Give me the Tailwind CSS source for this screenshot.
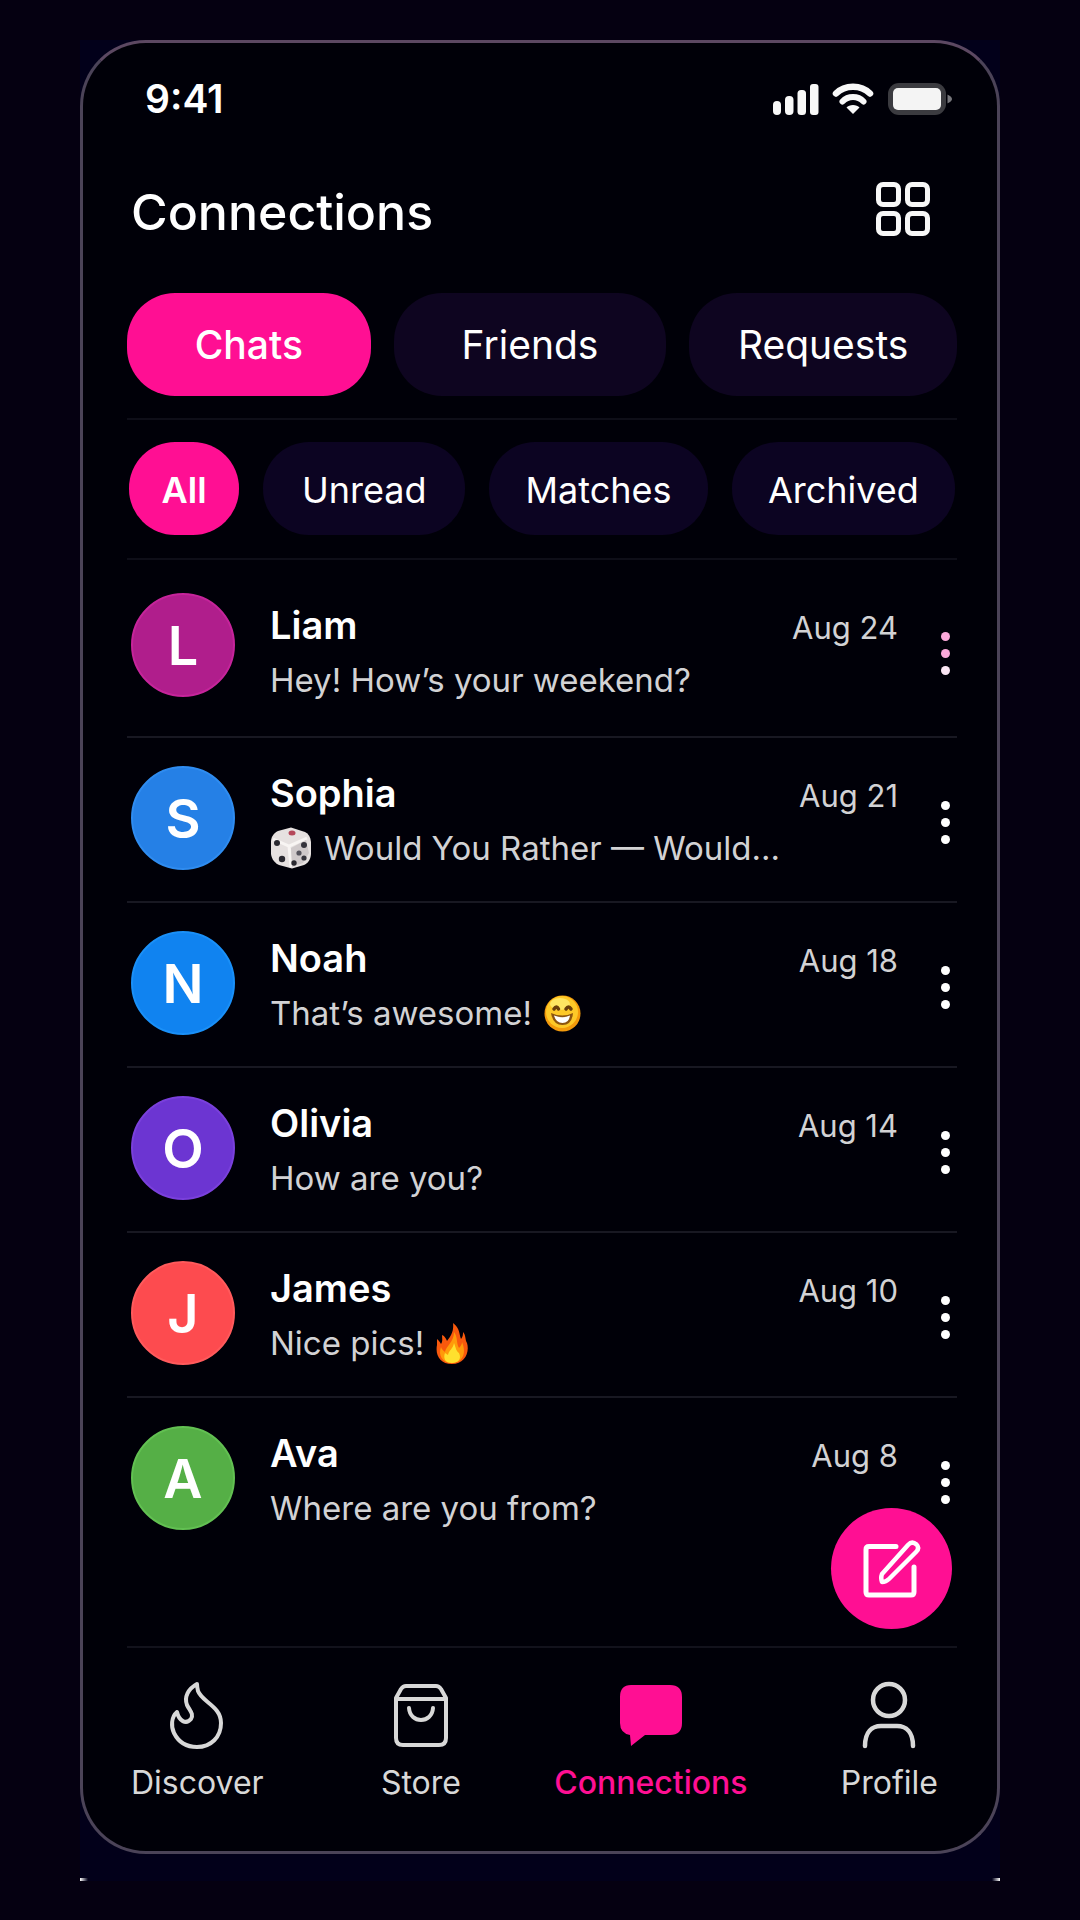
<!DOCTYPE html>
<html lang="en">
<head>
  <meta charset="UTF-8" />
  <meta name="viewport" content="width=device-width, initial-scale=1.0" />
  <title>Connections</title>
  <script src="https://cdn.jsdelivr.net/npm/@tailwindcss/browser@4"></script>
</head>
<body class="min-h-screen bg-[#050011] px-20 py-10 font-['Inter','Liberation_Sans',sans-serif] text-white">
  <div class="relative bg-[#02001a] pb-[27px]">
    <span class="absolute bottom-0 left-0 h-[3px] w-2 bg-linear-to-r from-white to-transparent"></span>
    <span class="absolute right-0 bottom-0 h-[3px] w-2 bg-linear-to-l from-white to-transparent"></span>

    <!-- Phone -->
    <div class="relative rounded-[66px] border-3 border-[#4b4358] border-t-[#5c4862] bg-[#000008]">

      <!-- Status bar -->
      <div class="flex h-[80px] items-center justify-between pt-8 pr-11 pl-[62px]">
        <span class="text-[39px] leading-[50px] font-semibold">9:41</span>
        <div class="flex items-center gap-[13px]">
          <svg class="h-8 w-[46px]" viewBox="0 0 46 32" fill="#f8f8f8">
            <rect x="0" y="18" width="8" height="14" rx="4" />
            <rect x="12" y="13" width="8.500" height="19" rx="4" />
            <rect x="24.500" y="7" width="8.500" height="25" rx="3.500" />
            <rect x="37" y="1" width="8.500" height="31" rx="3" />
          </svg>
          <svg class="h-8 w-[42px]" viewBox="0 0 42 32" fill="none" stroke="#f8f8f8" stroke-linecap="round">
            <path d="M4 10.500C13 1.500 29 1.500 38 10.500" stroke-width="6.500" />
            <path d="M10.500 18.500C16 12.500 26 12.500 31.500 18.500" stroke-width="6" />
            <path d="M21 31L14.500 24.500C17 21 25 21 27.500 24.500Z" fill="#f8f8f8" stroke="none" />
          </svg>
          <svg class="h-8 w-[66px]" viewBox="0 0 66 32">
            <rect x="1" y="0" width="58" height="32" rx="11" fill="#3b3b40" />
            <rect x="6" y="5" width="48" height="22" rx="5" fill="#f4f4f4" />
            <path d="M60.500 11.500C62 12.500 65 13.500 65 16C65 18.500 62 19.500 60.500 20.500Z" fill="#77777c" />
          </svg>
        </div>
      </div>

      <!-- Header -->
      <header class="mt-[60px] flex h-[58px] items-center justify-between pr-[66px] pl-12">
        <h1 class="text-[50px] leading-[58px] font-medium">Connections</h1>
        <button type="button" class="mb-1.5" aria-label="Grid view">
          <svg class="size-[56px]" viewBox="0 0 56 56" fill="none" stroke="#f7f7f7" stroke-width="5">
            <rect x="3.500" y="3.500" width="20" height="20" rx="4.500" />
            <rect x="32.500" y="3.500" width="20" height="20" rx="4.500" />
            <rect x="3.500" y="32.500" width="20" height="20" rx="4.500" />
            <rect x="32.500" y="32.500" width="20" height="20" rx="4.500" />
          </svg>
        </button>
      </header>

      <main class="pr-10 pl-11">
        <!-- Tabs -->
        <div class="mt-[52px] grid grid-cols-[244fr_273fr_268fr] gap-[23px] text-[39px]">
          <button type="button" class="h-[103px] rounded-[48px] bg-[#ff0f93] pt-0.5 font-medium">Chats</button>
          <button type="button" class="h-[103px] rounded-[48px] bg-[#0e0520] pt-0.5">Friends</button>
          <button type="button" class="h-[103px] rounded-[48px] bg-[#0e0520] pt-0.5">Requests</button>
        </div>
        <hr class="mt-[22px] border-t-2 border-[#0e0e18]" />

        <!-- Filters -->
        <div class="mx-0.5 mt-[22px] grid grid-cols-[110fr_202fr_218fr_223fr] gap-6 text-[36px]">
          <button type="button" class="h-[93px] rounded-[46px] bg-[#ff0f93] pt-0.5 font-semibold">All</button>
          <button type="button" class="h-[93px] rounded-[46px] bg-[#0c0422] pt-0.5">Unread</button>
          <button type="button" class="h-[93px] rounded-[46px] bg-[#0c0422] pt-0.5">Matches</button>
          <button type="button" class="h-[93px] rounded-[46px] bg-[#0c0422] pt-0.5">Archived</button>
        </div>
        <hr class="mt-[23px] border-t-2 border-[#0e0e18]" />

        <!-- Chats -->
        <ul class="pb-[116px] text-[#d2d2d4]">
          <li>
            <div class="flex gap-[35px] pt-[33px] pb-[38px] pl-1">
              <div class="flex size-[104px] shrink-0 items-center justify-center rounded-full border-2 border-[#c6249b] bg-[#b01e8c] text-[54px] font-semibold text-white">L</div>
              <div class="min-w-0 flex-1 pt-[10px]">
                <div class="flex items-baseline justify-between leading-[44px]">
                  <h2 class="text-[38px] font-semibold text-white">Liam</h2>
                  <time class="text-[31px]">Aug 24</time>
                </div>
                <p class="mt-3 text-[33px] leading-9 whitespace-nowrap">Hey! How’s your weekend?</p>
              </div>
              <button type="button" class="flex w-6 flex-col items-center justify-center gap-2 pt-4" aria-label="Options for Liam">
                <span class="size-[9px] rounded-full bg-[#fba9da]"></span>
                <span class="size-[9px] rounded-full bg-[#fba9da]"></span>
                <span class="size-[9px] rounded-full bg-[#fbe6f4]"></span>
              </button>
            </div>
            <hr class="border-t-2 border-[#181822]" />
          </li>
          <li>
            <div class="flex gap-[35px] pt-7 pb-[31px] pl-1">
              <div class="flex size-[104px] shrink-0 items-center justify-center rounded-full border-2 border-[#2f8cf0] bg-[#2580e6] text-[54px] font-semibold text-white">S</div>
              <div class="min-w-0 flex-1 pt-[5px]">
                <div class="flex items-baseline justify-between leading-[44px]">
                  <h2 class="text-[38px] font-semibold text-white">Sophia</h2>
                  <time class="text-[31px]">Aug 21</time>
                </div>
                <p class="mt-3 flex h-9 items-center gap-3 text-[33px] leading-9 whitespace-nowrap">
                  <svg class="size-[42px] shrink-0" viewBox="0 0 42 42" role="img" aria-label="Die">
                    <path d="M21 0.500L35 5C38.500 6.500 40.500 10 41 15L41 27C40.500 33 38 36 34 38L22 41.500L9 38C5 36 1.500 32 1 27L1 14C1.500 9 4 6 8 4Z" fill="#e6e1e0" />
                    <path d="M3 12L19 19L37 11M19 19L21 40" fill="none" stroke="#f8f5f3" stroke-width="3" />
                    <path d="M21 21L36 13L39 26L33 36L22 40Z" fill="#cfc9ca" />
                    <ellipse cx="22" cy="6" rx="3.500" ry="2.500" fill="#b5485a" />
                    <circle cx="7" cy="16" r="3" fill="#2a2930" />
                    <circle cx="12" cy="32" r="3.200" fill="#2a2930" />
                    <circle cx="24" cy="36" r="2.700" fill="#2a2930" />
                    <circle cx="34" cy="18" r="3" fill="#35343c" />
                    <circle cx="29" cy="26" r="2.600" fill="#55535c" />
                    <circle cx="34" cy="31" r="2.600" fill="#35343c" />
                  </svg>
                  Would You Rather — Would...
                </p>
              </div>
              <button type="button" class="flex w-6 flex-col items-center justify-center gap-2 pt-2" aria-label="Options for Sophia">
                <span class="size-[9px] rounded-full bg-white"></span>
                <span class="size-[9px] rounded-full bg-white"></span>
                <span class="size-[9px] rounded-full bg-white"></span>
              </button>
            </div>
            <hr class="border-t-2 border-[#181822]" />
          </li>
          <li>
            <div class="flex gap-[35px] pt-7 pb-[31px] pl-1">
              <div class="flex size-[104px] shrink-0 items-center justify-center rounded-full border-2 border-[#1a90f8] bg-[#1083f0] text-[54px] font-semibold text-white">N</div>
              <div class="min-w-0 flex-1 pt-[5px]">
                <div class="flex items-baseline justify-between leading-[44px]">
                  <h2 class="text-[38px] font-semibold text-white">Noah</h2>
                  <time class="text-[31px]">Aug 18</time>
                </div>
                <p class="mt-3 flex h-9 items-center gap-3 text-[33px] leading-9 whitespace-nowrap">
                  That’s awesome!
                  <svg class="size-[37px] shrink-0" viewBox="0 0 37 37" role="img" aria-label="Grinning face">
                    <circle cx="18.500" cy="18.500" r="18" fill="#f39a0c" />
                    <circle cx="18" cy="17" r="16" fill="#fdc928" />
                    <ellipse cx="16" cy="9" rx="10" ry="6" fill="#ffe662" />
                    <path d="M10 14Q12.500 10 14.500 14M22 14Q24.500 10 27 14" fill="none" stroke="#6b3f0a" stroke-width="3.500" stroke-linecap="round" />
                    <path d="M7 18Q18.500 23 29 18Q28 30 18.500 30Q9 30 7 18Z" fill="#8c5510" />
                    <path d="M10 20.500Q18.500 24 26 20.500Q25 28 18.500 28Q12 28 10 20.500Z" fill="#ffffff" />
                  </svg>
                </p>
              </div>
              <button type="button" class="flex w-6 flex-col items-center justify-center gap-2 pt-2" aria-label="Options for Noah">
                <span class="size-[9px] rounded-full bg-white"></span>
                <span class="size-[9px] rounded-full bg-white"></span>
                <span class="size-[9px] rounded-full bg-white"></span>
              </button>
            </div>
            <hr class="border-t-2 border-[#181822]" />
          </li>
          <li>
            <div class="flex gap-[35px] pt-7 pb-[31px] pl-1">
              <div class="flex size-[104px] shrink-0 items-center justify-center rounded-full border-2 border-[#7a40dc] bg-[#6c35d2] text-[54px] font-semibold text-white">O</div>
              <div class="min-w-0 flex-1 pt-[5px]">
                <div class="flex items-baseline justify-between leading-[44px]">
                  <h2 class="text-[38px] font-semibold text-white">Olivia</h2>
                  <time class="text-[31px]">Aug 14</time>
                </div>
                <p class="mt-3 text-[33px] leading-9 whitespace-nowrap">How are you?</p>
              </div>
              <button type="button" class="flex w-6 flex-col items-center justify-center gap-2 pt-2" aria-label="Options for Olivia">
                <span class="size-[9px] rounded-full bg-white"></span>
                <span class="size-[9px] rounded-full bg-white"></span>
                <span class="size-[9px] rounded-full bg-white"></span>
              </button>
            </div>
            <hr class="border-t-2 border-[#181822]" />
          </li>
          <li>
            <div class="flex gap-[35px] pt-7 pb-[31px] pl-1">
              <div class="flex size-[104px] shrink-0 items-center justify-center rounded-full border-2 border-[#ff5a5c] bg-[#fd4b4f] text-[54px] font-semibold text-white">J</div>
              <div class="min-w-0 flex-1 pt-[5px]">
                <div class="flex items-baseline justify-between leading-[44px]">
                  <h2 class="text-[38px] font-semibold text-white">James</h2>
                  <time class="text-[31px]">Aug 10</time>
                </div>
                <p class="mt-3 flex h-9 items-center gap-3 text-[33px] leading-9 whitespace-nowrap">
                  Nice pics!
                  <svg class="h-[41px] w-8 shrink-0" viewBox="0 0 32 41" role="img" aria-label="Fire">
                    <path d="M17 0C24 5 23 11 25 16C27 14 27 11 27 9C30 12 29 17 31 20C34 30 28 41 16 41C4 41 -1 32 1 22C1 20 1 18 1 16C3 18 4 19 5 21C7 18 6 15 6 12C9 13 10 16 11 18C15 13 18 8 17 0Z" fill="#f8590d" />
                    <path d="M18 9C22 14 20 20 23 25C25 23 26 21 26 19C31 31 26 40 16 40C6 40 2 32 5 24C6 27 8 28 9 29C10 23 18 19 18 9Z" fill="#ff9a0a" />
                    <path d="M18 20C20 25 20 28 23 30C26 36 22 40 16 40C9 40 7 35 9 30L12 32C13 27 17 26 18 20Z" fill="#ffe02e" />
                  </svg>
                </p>
              </div>
              <button type="button" class="flex w-6 flex-col items-center justify-center gap-2 pt-2" aria-label="Options for James">
                <span class="size-[9px] rounded-full bg-white"></span>
                <span class="size-[9px] rounded-full bg-white"></span>
                <span class="size-[9px] rounded-full bg-white"></span>
              </button>
            </div>
            <hr class="border-t-2 border-[#181822]" />
          </li>
          <li>
            <div class="flex gap-[35px] pt-7 pl-1">
              <div class="flex size-[104px] shrink-0 items-center justify-center rounded-full border-2 border-[#62c052] bg-[#55af46] text-[54px] font-semibold text-white">A</div>
              <div class="min-w-0 flex-1 pt-[5px]">
                <div class="flex items-baseline justify-between leading-[44px]">
                  <h2 class="text-[38px] font-semibold text-white">Ava</h2>
                  <time class="text-[31px]">Aug 8</time>
                </div>
                <p class="mt-3 text-[33px] leading-9 whitespace-nowrap">Where are you from?</p>
              </div>
              <button type="button" class="flex w-6 flex-col items-center justify-center gap-2 pt-2" aria-label="Options for Ava">
                <span class="size-[9px] rounded-full bg-white"></span>
                <span class="size-[9px] rounded-full bg-white"></span>
                <span class="size-[9px] rounded-full bg-white"></span>
              </button>
            </div>
          </li>
        </ul>
        <hr class="border-t-2 border-[#12121c]" />
      </main>

      <!-- New message -->
      <button type="button" aria-label="New message" class="absolute right-[45px] bottom-[222px] flex size-[121px] items-center justify-center rounded-full bg-[#ff0f93]">
        <svg class="size-[60px]" viewBox="0 0 60 60" fill="none" stroke="#ffffff" stroke-width="5" stroke-linecap="round" stroke-linejoin="round">
          <path d="M34 7.500H7Q4 7.500 4 10.500V53Q4 56 7 56H49Q52 56 52 53V28" />
          <path d="M20 35L46 6Q50 1.500 54.500 5.500Q58 9 54 13L27 40Q24 43 20 43Q18.500 39 20 35Z" stroke-width="4.500" />
        </svg>
      </button>

      <!-- Bottom nav -->
      <nav class="flex justify-between pt-[33px] pr-[59px] pb-12 pl-12 text-[32px] leading-10 text-[#d8d8d8]">
        <a href="#" class="mr-6 flex flex-col items-center gap-[14px]">
          <svg class="h-[68px] w-[56px]" viewBox="0 0 56 68" fill="none" stroke="currentColor" stroke-width="4" stroke-linecap="round" stroke-linejoin="round">
            <path d="M28 3C19 8 15 16 18 24C21 30 25 33 22 38C17 44 10 40 8 31C2 36 2 46 5 52C10 62 19 66 28 66C42 66 52 56 52 42C52 25 33 21 29 10Q28 6 28 3Z" />
          </svg>
          Discover
        </a>
        <a href="#" class="flex flex-col items-center gap-[14px]">
          <svg class="h-[68px] w-[56px]" viewBox="0 0 56 68" fill="none" stroke="currentColor" stroke-width="4" stroke-linecap="round" stroke-linejoin="round">
            <path d="M3 17L8 8Q10 5 13 5H43Q46 5 48 8L53 17V57Q53 64 46 64H10Q3 64 3 57Z" />
            <path d="M4 18H52M16 27C17 43 39 43 40 27" />
          </svg>
          Store
        </a>
        <a href="#" class="flex flex-col items-center gap-[14px] font-medium text-[#ff0f93]" aria-current="page">
          <svg class="h-[68px] w-[64px]" viewBox="0 0 64 68" fill="currentColor">
            <path d="M12 4H51Q63 4 63 16V42Q63 54 51 54H26L12 65L11 54Q1 52 1 42V16Q1 4 12 4Z" />
          </svg>
          Connections
        </a>
        <a href="#" class="flex flex-col items-center gap-[14px]">
          <svg class="h-[68px] w-[56px]" viewBox="0 0 56 68" fill="none" stroke="currentColor" stroke-width="4.500" stroke-linecap="round">
            <circle cx="28" cy="19" r="16" />
            <path d="M4 65C4 51 11 45 20 45H36C45 45 52 51 52 65" />
          </svg>
          Profile
        </a>
      </nav>
    </div>
  </div>
</body>
</html>
